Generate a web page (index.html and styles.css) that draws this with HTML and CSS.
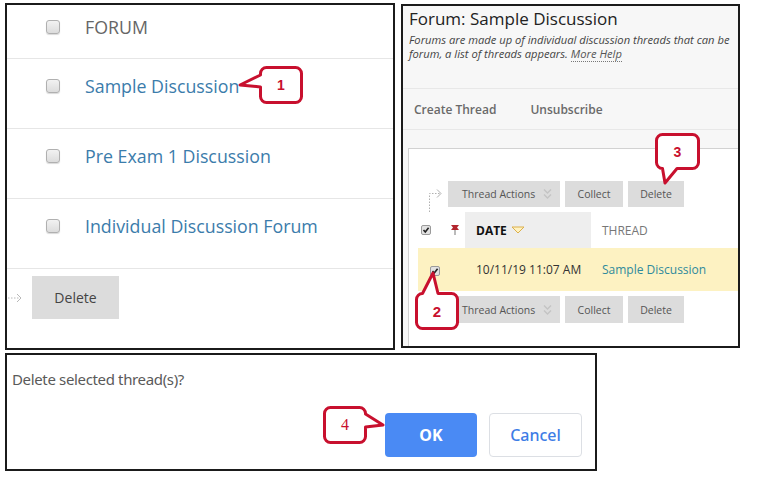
FILE: index.html
```html
<!DOCTYPE html>
<html>
<head>
<meta charset="utf-8">
<link rel="stylesheet" href="styles.css">
</head>
<body>
<div class="sheet">
  <div class="top">

    <!-- forum list -->
    <div class="panel forums">
      <div class="frow head"><span class="cb"></span><span class="fname">FORUM</span></div>
      <div class="frow"><span class="cb"></span><span class="fname link">Sample Discussion</span></div>
      <div class="frow"><span class="cb"></span><span class="fname link">Pre Exam 1 Discussion</span></div>
      <div class="frow"><span class="cb"></span><span class="fname link">Individual Discussion Forum</span></div>
      <div class="fbar">
        <svg class="farrow" width="14" height="10" viewBox="0 0 14 10"><path d="M0 5H12" stroke="#b8b8b8" stroke-dasharray="1.5 1.5"/><path d="M9 1L13 5L9 9" fill="none" stroke="#b8b8b8"/></svg>
        <span class="gbtn">Delete</span>
      </div>
    </div>

    <!-- thread list -->
    <div class="panel thread">
      <div class="ttitle">Forum: Sample Discussion</div>
      <div class="tdesc">
        <div>Forums are made up of individual discussion threads that can be</div>
        <div>forum, a list of threads appears. <span class="more">More Help</span></div>
      </div>
      <div class="tactions"><span>Create Thread</span><span>Unsubscribe</span></div>
      <div class="tbox">
        <div class="tbar first">
          <svg class="larrow" width="22" height="32" viewBox="0 0 22 32"><path d="M3.5 31V12.5H14" fill="none" stroke="#b0b0b0" stroke-dasharray="1.5 1.5"/><path d="M11 8.5L15 12.5L11 16.5" fill="none" stroke="#b0b0b0"/></svg>
          <span class="tbtn actions">Thread Actions <svg width="9" height="12" viewBox="0 0 9 12"><path d="M1 1.5L4.5 5L8 1.5M1 6.5L4.5 10L8 6.5" fill="none" stroke="#c4c4c4" stroke-width="1.4"/></svg></span>
          <span class="tbtn collect">Collect</span>
          <span class="tbtn del">Delete</span>
        </div>
        <div class="trow thead">
          <span class="c-cb"><svg width="10" height="10" viewBox="0 0 10 10"><rect x="0.5" y="0.5" width="9" height="9" rx="1.5" fill="#e2e2e2" stroke="#9a9a9a"/><path d="M2.5 5L4.3 7L7.6 2.8" fill="none" stroke="#222" stroke-width="1.6"/></svg></span>
          <span class="c-flag"><svg width="10" height="12" viewBox="0 0 10 12"><path d="M5 2V11" stroke="#777" stroke-width="1"/><path d="M1 1H9L7 3.5L9 6H1L3 3.5Z" fill="#b3262e"/></svg></span>
          <span class="c-date">DATE <svg width="14" height="8" viewBox="0 0 14 8"><path d="M1 1H13L7 7Z" fill="#fff2c2" stroke="#dcb04c"/></svg></span>
          <span class="c-thread">THREAD</span>
        </div>
        <div class="trow sel">
          <span class="c-cb"><svg width="10" height="10" viewBox="0 0 10 10"><rect x="0.5" y="0.5" width="9" height="9" rx="1.5" fill="#e2e2e2" stroke="#9a9a9a"/><path d="M2.5 5L4.3 7L7.6 2.8" fill="none" stroke="#222" stroke-width="1.6"/></svg></span>
          <span class="c-flag"></span>
          <span class="c-date">10/11/19 11:07 AM</span>
          <span class="c-thread tlink">Sample Discussion</span>
        </div>
        <div class="tbar">
          <span class="tbtn actions">Thread Actions <svg width="9" height="12" viewBox="0 0 9 12"><path d="M1 1.5L4.5 5L8 1.5M1 6.5L4.5 10L8 6.5" fill="none" stroke="#c4c4c4" stroke-width="1.4"/></svg></span>
          <span class="tbtn collect">Collect</span>
          <span class="tbtn del">Delete</span>
        </div>
      </div>
    </div>
  </div>

  <!-- confirm dialog -->
  <div class="panel dialog">
    <div class="dmsg">Delete selected thread(s)?</div>
    <div class="dbtns">
      <span class="dbtn ok">OK</span>
      <span class="dbtn cancel">Cancel</span>
    </div>
  </div>

  <!-- step callouts -->
  <div class="callout c1">
    <svg width="68" height="43" viewBox="0 0 68 43"><path d="M28.5 3.5H57.5A6 6 0 0 1 63.5 9.5V32.5A6 6 0 0 1 57.5 38.5H28.5A6 6 0 0 1 22.5 32.5V23L2 21L22.5 11V9.5A6 6 0 0 1 28.5 3.5Z" fill="#fff" stroke="#c8102e" stroke-width="3" stroke-linejoin="round"/></svg>
    <span class="num">1</span>
  </div>
  <div class="callout c2">
    <svg width="50" height="62" viewBox="0 0 50 62"><path d="M4.5 28.5A6 6 0 0 1 10.5 22.5L21 2L26 22.5H39.5A6 6 0 0 1 45.5 28.5V51.5A6 6 0 0 1 39.5 57.5H10.5A6 6 0 0 1 4.5 51.5Z" fill="#fff" stroke="#c8102e" stroke-width="3" stroke-linejoin="round"/></svg>
    <span class="num">2</span>
  </div>
  <div class="callout c3">
    <svg width="51" height="54" viewBox="0 0 51 54"><path d="M10.5 3.5H40.5A6 6 0 0 1 46.5 9.5V31.5A6 6 0 0 1 40.5 37.5H25L13 52L10.5 37.5A6 6 0 0 1 4.5 31.5V9.5A6 6 0 0 1 10.5 3.5Z" fill="#fff" stroke="#c8102e" stroke-width="3" stroke-linejoin="round"/></svg>
    <span class="num">3</span>
  </div>
  <div class="callout c4">
    <svg width="64" height="42" viewBox="0 0 64 42"><path d="M9.5 3.5H38.5A6 6 0 0 1 44.5 9.5V10L62 21L44.5 23V32.5A6 6 0 0 1 38.5 38.5H9.5A6 6 0 0 1 3.5 32.5V9.5A6 6 0 0 1 9.5 3.5Z" fill="#fff" stroke="#c8102e" stroke-width="3" stroke-linejoin="round"/></svg>
    <span class="num serif">4</span>
  </div>
</div>
</body>
</html>
```

FILE: styles.css
```css
* {
    box-sizing: border-box;
}

body {
    margin: 0;
    background: #fff;
    font-family: "Open Sans", "Noto Sans", sans-serif;
}

.sheet {
    position: relative;
    width: 758px;
    height: 489px;
    padding: 3px 0 0 5px;
}

.top {
    display: flex;
    align-items: flex-start;
    gap: 6px;
}

.panel {
    border: 2px solid #1b1b1b;
    background: #fff;
    overflow: hidden;
}

/* forum list */
.forums {
    width: 390px;
    height: 347px;
}

.frow {
    display: flex;
    align-items: flex-start;
    height: 70px;
    padding: 17px 0 0 39px;
    border-bottom: 1px solid #e6e6e6;
}

.frow.head {
    height: 54px;
    padding-top: 12px;
}

.cb {
    width: 14px;
    height: 14px;
    margin-top: 3px;
    border: 1px solid #b0b0b0;
    border-radius: 3px;
    background: linear-gradient(#f2f2f2, #dcdcdc);
    box-shadow: 0 1px 1px rgba(0, 0, 0, 0.15);
}

.fname {
    margin-left: 25px;
    font-size: 17.8px;
    line-height: 20px;
    color: #666;
}

.fname.link {
    color: #3b7cab;
}

.fbar {
    display: flex;
    align-items: center;
    padding: 7px 0 0 1px;
}

.gbtn {
    display: flex;
    align-items: center;
    justify-content: center;
    width: 87px;
    height: 43px;
    margin-left: 10px;
    background: #dcdcdc;
    font-size: 14px;
    color: #444;
}

/* thread list */
.thread {
    width: 339px;
    height: 344px;
    margin-top: 1px;
    background: #f7f7f7;
}

.ttitle {
    padding: 2px 0 0 6px;
    font-size: 17px;
    line-height: 22px;
    color: #222;
    white-space: nowrap;
}

.tdesc {
    margin-top: 3px;
    padding-left: 6px;
    height: 55px;
    font-size: 11.2px;
    line-height: 14px;
    font-style: italic;
    color: #444;
    white-space: nowrap;
}

.more {
    border-bottom: 1px dotted #777;
    color: #555;
}

.tactions {
    display: flex;
    align-items: center;
    gap: 34px;
    height: 42px;
    padding-left: 11px;
    border-top: 1px solid #e8e8e8;
    border-bottom: 1px solid #e8e8e8;
    font-size: 12px;
    font-weight: 600;
    color: #6a6a6a;
}

.tbox {
    width: 400px;
    height: 230px;
    margin: 18px 0 0 5px;
    border: 1px solid #d2d2d2;
    background: #fff;
}

.tbar {
    display: flex;
    align-items: flex-start;
    gap: 5px;
    height: 27px;
    margin-top: 5px;
    padding-left: 39px;
}

.tbar.first {
    height: 26px;
    margin-top: 32px;
    padding-left: 17px;
}

.larrow {
    flex: none;
    margin-right: -5px;
}

.tbtn {
    display: flex;
    align-items: center;
    justify-content: center;
    height: 100%;
    background: #dcdcdc;
    font-size: 10.5px;
    color: #555;
}

.tbtn.actions {
    width: 112px;
    justify-content: flex-start;
    padding-left: 14px;
    gap: 8px;
}

.tbtn.collect {
    width: 58px;
}

.tbtn.del {
    width: 56px;
}

.trow {
    display: flex;
    align-items: stretch;
    margin-left: 9px;
    font-size: 12px;
}

.trow > span {
    display: flex;
    align-items: center;
}

.thead {
    height: 36px;
    margin-top: 5px;
}

.sel {
    height: 43px;
    background: #fdf2c2;
}

.c-cb {
    width: 27px;
    padding-left: 3px;
}

.sel .c-cb {
    padding-left: 12px;
    padding-top: 3px;
}

.c-flag {
    width: 20px;
    justify-content: center;
}

.c-date {
    width: 126px;
    padding-left: 11px;
    gap: 4px;
    color: #333;
}

.thead .c-date {
    background: #eee;
    font-weight: 700;
    color: #111;
}

.c-thread {
    padding-left: 11px;
    color: #777;
    white-space: nowrap;
}

.c-thread.tlink {
    color: #2f8a9c;
}

/* dialog */
.dialog {
    width: 592px;
    height: 118px;
    margin-top: 3px;
    font-family: "Noto Sans", "Open Sans", sans-serif;
}

.dmsg {
    padding: 14px 0 0 5px;
    font-size: 15px;
    letter-spacing: -0.35px;
    line-height: 20px;
    color: #5a5a5a;
}

.dbtns {
    display: flex;
    justify-content: flex-end;
    gap: 12px;
    margin-top: 24px;
    padding-right: 13px;
}

.dbtn {
    display: flex;
    align-items: center;
    justify-content: center;
    height: 44px;
    border-radius: 4px;
    font-size: 16px;
}

.dbtn.ok {
    width: 92px;
    background: #4a8af4;
    color: #fff;
    font-weight: 700;
}

.dbtn.cancel {
    width: 93px;
    border: 1px solid #dcdfe4;
    color: #3d7de6;
    font-weight: 500;
}

/* callouts */
.callout {
    position: absolute;
}

.callout svg {
    display: block;
}

.num {
    position: absolute;
    display: flex;
    align-items: center;
    justify-content: center;
    font-family: "Liberation Sans", sans-serif;
    font-weight: 700;
    font-size: 14px;
    color: #c8102e;
}

.num.serif {
    font-family: "Liberation Serif", serif;
    font-weight: 400;
    font-size: 16px;
}

.c1 {
    left: 238px;
    top: 64px;
}

.c1 .num {
    left: 22px;
    top: 3px;
    width: 42px;
    height: 36px;
}

.c2 {
    left: 412px;
    top: 271px;
}

.c2 .num {
    left: 4px;
    top: 22px;
    width: 42px;
    height: 36px;
    font-size: 15px;
}

.c3 {
    left: 652px;
    top: 131px;
}

.c3 .num {
    left: 4px;
    top: 3px;
    width: 43px;
    height: 35px;
}

.c4 {
    left: 321px;
    top: 404px;
}

.c4 .num {
    left: 3px;
    top: 3px;
    width: 42px;
    height: 36px;
}
```
